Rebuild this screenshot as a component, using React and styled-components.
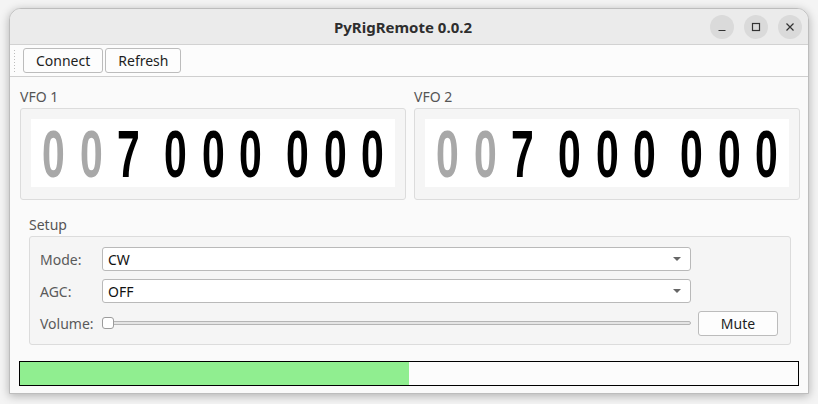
import React from 'react'
import styled, { createGlobalStyle } from 'styled-components'

const GlobalStyle = createGlobalStyle`
  html, body {
    margin: 0;
    padding: 0;
    background: #f4f4f4;
  }
  body {
    font-family: "Noto Sans", "DejaVu Sans", sans-serif;
    font-size: 14px;
    color: #1e1e1e;
  }
`

const vfos = [
  { id: 1, value: '007000000' },
  { id: 2, value: '007000000' },
]

const App = () => {
  return (
    <>
      <GlobalStyle />
      <Page>
        <Window>
          <TitleBar>
            <span />
            <Title>PyRigRemote 0.0.2</Title>
            <Controls>
              <CtrlButton aria-label="minimize">
                <svg width="10" height="10" viewBox="0 0 10 10">
                  <path d="M1.5 8.5h7" stroke="#333" strokeWidth="1.2" />
                </svg>
              </CtrlButton>
              <CtrlButton aria-label="maximize">
                <svg width="10" height="10" viewBox="0 0 10 10">
                  <rect x="1.5" y="1.5" width="7" height="7" fill="none" stroke="#333" strokeWidth="1.2" />
                </svg>
              </CtrlButton>
              <CtrlButton aria-label="close">
                <svg width="10" height="10" viewBox="0 0 10 10">
                  <path d="M1.5 1.5l7 7M8.5 1.5l-7 7" stroke="#333" strokeWidth="1.2" />
                </svg>
              </CtrlButton>
            </Controls>
          </TitleBar>

          <Toolbar>
            <Grip />
            <ToolButton>Connect</ToolButton>
            <ToolButton>Refresh</ToolButton>
          </Toolbar>

          <Content>
            <VfoRow>
              {vfos.map((v) => (
                <VfoCol key={v.id}>
                  <GroupLabel>VFO {v.id}</GroupLabel>
                  <GroupBox>
                    <Display>
                      {v.value.split('').map((d, i) => {
                        // leading zeros are dimmed
                        const lead = v.value.slice(0, i + 1).split('').every((c) => c === '0')
                        return (
                          <Digit key={i} $dim={lead} $groupEnd={i === 2 || i === 5}>
                            <Glyph>{d}</Glyph>
                          </Digit>
                        )
                      })}
                    </Display>
                  </GroupBox>
                </VfoCol>
              ))}
            </VfoRow>

            <SetupSection>
              <GroupLabel>Setup</GroupLabel>
              <SetupBox>
                <FieldLabel>Mode:</FieldLabel>
                <Combo>
                  <span>CW</span>
                  <Arrow />
                </Combo>
                <span />
                <FieldLabel>AGC:</FieldLabel>
                <Combo>
                  <span>OFF</span>
                  <Arrow />
                </Combo>
                <span />
                <FieldLabel>Volume:</FieldLabel>
                <Slider>
                  <Groove />
                  <Handle />
                </Slider>
                <MuteButton>Mute</MuteButton>
              </SetupBox>
            </SetupSection>

            <Progress>
              <ProgressFill style={{ width: '50%' }} />
            </Progress>
          </Content>
        </Window>
      </Page>
    </>
  )
}

export default App

const Page = styled.div`
  width: 818px;
  height: 404px;
  padding: 8px 0 0 9px;
  box-sizing: border-box;
  overflow: hidden;
`
const Window = styled.div`
  width: 800px;
  height: 386px;
  box-sizing: border-box;
  border: 1px solid #bdbdbd;
  border-radius: 12px 12px 0 0;
  background: #fafafa;
  box-shadow: 0 2px 10px rgba(0, 0, 0, 0.28);
  overflow: hidden;
  display: flex;
  flex-direction: column;
`
const TitleBar = styled.div`
  height: 35px;
  flex-shrink: 0;
  display: grid;
  grid-template-columns: 1fr auto 1fr;
  align-items: center;
  background: #ebebeb;
  border-bottom: 1px solid #d2d2d2;
`
const Title = styled.div`
  font-weight: 700;
  font-size: 15px;
  color: #2e2e2e;
  padding-right: 12px;
`
const Controls = styled.div`
  display: flex;
  justify-content: flex-end;
  gap: 10px;
  padding-right: 6px;
`
const CtrlButton = styled.div`
  width: 24px;
  height: 24px;
  border-radius: 50%;
  background: #dadada;
  display: flex;
  align-items: center;
  justify-content: center;
`
const Toolbar = styled.div`
  height: 31px;
  flex-shrink: 0;
  display: flex;
  align-items: center;
  gap: 2px;
  padding-left: 3px;
  background: #fcfcfc;
  border-bottom: 1px solid #cfcfcf;
`
const Grip = styled.div`
  width: 4px;
  height: 24px;
  margin-right: 4px;
  background-image: radial-gradient(circle, #bdbdbd 0.7px, transparent 0.9px);
  background-size: 3px 3px;
`
const ToolButton = styled.button`
  height: 25px;
  padding: 0 12px;
  font-family: inherit;
  font-size: 14px;
  color: #1e1e1e;
  background: #fdfdfd;
  border: 1px solid #bcbcbc;
  border-radius: 3px;
`
const Content = styled.div`
  flex: 1;
  display: flex;
  flex-direction: column;
  padding: 10px 8px 0 10px;
`
const VfoRow = styled.div`
  display: grid;
  grid-template-columns: 386px 386px;
  column-gap: 8px;
`
const VfoCol = styled.div`
  display: flex;
  flex-direction: column;
`
const GroupLabel = styled.div`
  font-size: 14px;
  line-height: 20px;
  height: 21px;
  color: #555;
`
const GroupBox = styled.div`
  height: 92px;
  box-sizing: border-box;
  background: #f5f5f5;
  border: 1px solid #dcdcdc;
  border-radius: 3px;
  padding: 10px 10px 11px 10px;
`
const Display = styled.div`
  height: 68px;
  background: #fff;
  display: flex;
  justify-content: center;
  align-items: flex-start;
  padding-top: 3px;
  box-sizing: border-box;
`
const Digit = styled.span`
  width: 20px;
  margin-right: ${(p) => (p.$groupEnd ? '27px' : '17.5px')};
  &:last-child {
    margin-right: 0;
  }
  display: flex;
  justify-content: center;
  font-family: "Liberation Sans Narrow", "Liberation Sans", sans-serif;
  font-weight: 700;
  font-size: 66px;
  line-height: 65px;
  color: ${(p) => (p.$dim ? '#a8a8a8' : '#000')};
`
const Glyph = styled.span`
  display: inline-block;
  transform: scaleX(0.62);
`
const SetupSection = styled.div`
  display: flex;
  flex-direction: column;
  margin-top: 15px;
  padding: 0 9px 0 9px;
`
const SetupBox = styled.div`
  box-sizing: border-box;
  height: 109px;
  background: #f5f5f5;
  border: 1px solid #dcdcdc;
  border-radius: 3px;
  padding: 10px 12px 10px 10px;
  display: grid;
  grid-template-columns: 55px 589px 80px;
  grid-template-rows: 24px 24px 24px;
  column-gap: 7px;
  row-gap: 8px;
  align-items: center;
`
const FieldLabel = styled.div`
  color: #5a5a5a;
  font-size: 14px;
`
const Combo = styled.div`
  height: 24px;
  box-sizing: border-box;
  background: #fff;
  border: 1px solid #b9b9b9;
  border-radius: 3px;
  display: flex;
  align-items: center;
  justify-content: space-between;
  padding: 0 9px 0 5px;
  color: #111;
`
const Arrow = styled.span`
  width: 0;
  height: 0;
  border-left: 4px solid transparent;
  border-right: 4px solid transparent;
  border-top: 4px solid #666;
`
const Slider = styled.div`
  position: relative;
  height: 24px;
  display: flex;
  align-items: center;
`
const Groove = styled.div`
  width: 100%;
  height: 4px;
  box-sizing: border-box;
  background: #e4e4e4;
  border: 1px solid #b5b5b5;
  border-radius: 2px;
`
const Handle = styled.div`
  position: absolute;
  left: 0;
  top: 6px;
  width: 12px;
  height: 12px;
  box-sizing: border-box;
  background: #fff;
  border: 1px solid #9c9c9c;
  border-radius: 3px;
`
const MuteButton = styled.button`
  height: 25px;
  font-family: inherit;
  font-size: 14px;
  color: #1e1e1e;
  background: #fdfdfd;
  border: 1px solid #bcbcbc;
  border-radius: 3px;
`
const Progress = styled.div`
  margin: 16px 0 0 -1px;
  width: 780px;
  height: 25px;
  box-sizing: border-box;
  border: 1px solid #000;
  background: #fcfcfc;
`
const ProgressFill = styled.div`
  height: 100%;
  background: #90ee90;
`
